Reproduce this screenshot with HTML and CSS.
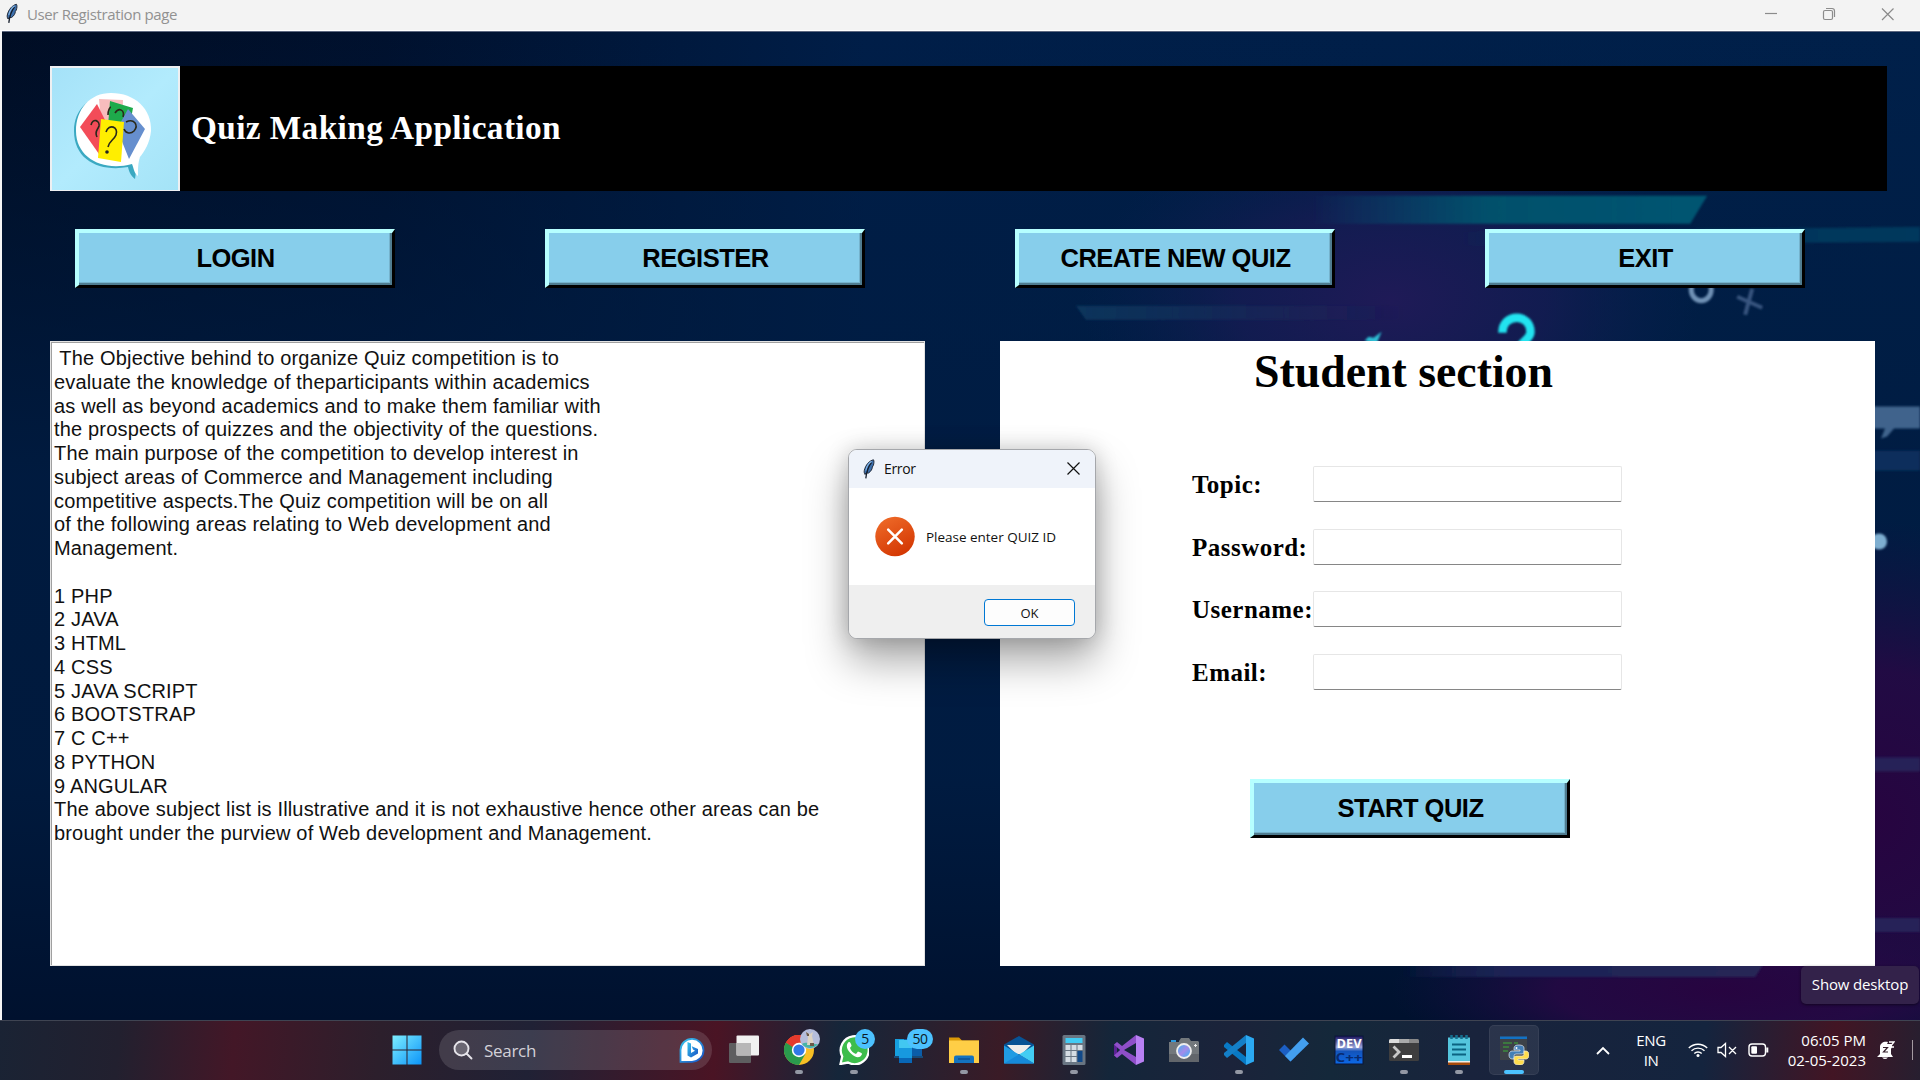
FILE: index.html
```html
<!DOCTYPE html>
<html lang="en">
<head>
<meta charset="utf-8">
<title>User Registration page</title>
<link rel="stylesheet" href="styles.css">
</head>
<body>
<svg width="0" height="0" class="defs">
  <defs>
    <symbol id="feather" viewBox="0 0 12 20">
      <path d="M10.5 .8C6.500 1.500 2.500 6 1.300 11.500c-.3 1.500 0 3 .8 4l.8-1.500h2.600C8 12.500 9.500 9.500 9.300 8l1-1.500C11 4.500 11.200 2 10.500.8Z" fill="#3d70ad" stroke="#222b3a" stroke-width="1"/>
      <path d="M8.500 3.500C5.500 7 3.800 11 2.800 19.300" fill="none" stroke="#141d2b" stroke-width="1.300"/>
      <path d="M8.600 2.300C5.500 4.500 3.500 8 2.800 11.500" fill="none" stroke="#83b4e6" stroke-width="1.100"/>
    </symbol>
  </defs>
</svg>
<div class="desktop">
  <header class="titlebar">
    <svg class="feather" width="12" height="21"><use href="#feather"/></svg>
    <span class="caption">User Registration page</span>
    <div class="controls">
      <svg width="58" height="30" viewBox="0 0 58 30"><path d="M23 14.500h12"/></svg>
      <svg width="58" height="30" viewBox="0 0 58 30"><rect x="23.500" y="11.500" width="9" height="9" rx="1.500"/><path d="M26 9.500h6a2.500 2.500 0 0 1 2.500 2.500v6"/></svg>
      <svg width="58" height="30" viewBox="0 0 58 30"><path d="m24 9.500 11.500 11.500M35.500 9.500 24 21"/></svg>
    </div>
  </header>

  <main class="client">
    <svg class="wallpaper" viewBox="0 31 1920 989" preserveAspectRatio="none">
      <defs>
        <linearGradient id="base" x1="0" y1="0" x2="1" y2="0">
          <stop offset="0" stop-color="#000d24"/><stop offset=".2" stop-color="#00112e"/><stop offset=".45" stop-color="#001e48"/><stop offset="1" stop-color="#00204a"/>
        </linearGradient>
        <linearGradient id="lowleft" x1="0" y1="0" x2="0" y2="1">
          <stop offset="0" stop-color="#001c40" stop-opacity="0"/><stop offset=".45" stop-color="#001c42" stop-opacity=".9"/><stop offset=".75" stop-color="#001b40" stop-opacity=".9"/><stop offset="1" stop-color="#00112e"/>
        </linearGradient>
        <radialGradient id="violet"><stop offset="0" stop-color="#1f1a57"/><stop offset=".5" stop-color="#191b55" stop-opacity=".7"/><stop offset="1" stop-color="#0a1f50" stop-opacity="0"/></radialGradient>
        <radialGradient id="plum"><stop offset="0" stop-color="#270440"/><stop offset=".5" stop-color="#250944" stop-opacity=".9"/><stop offset="1" stop-color="#150e42" stop-opacity="0"/></radialGradient>
        <linearGradient id="teal"><stop offset="0" stop-color="#005a78" stop-opacity="0"/><stop offset=".45" stop-color="#00566f" stop-opacity=".9"/><stop offset="1" stop-color="#005572"/></linearGradient>
        <linearGradient id="haze"><stop offset="0" stop-color="#003f62" stop-opacity="0"/><stop offset=".4" stop-color="#003358"/><stop offset="1" stop-color="#00395d"/></linearGradient>
        <linearGradient id="slate"><stop offset="0" stop-color="#0b3b62" stop-opacity=".8"/><stop offset="1" stop-color="#26305e" stop-opacity="0"/></linearGradient>
        <linearGradient id="floor"><stop offset="0" stop-color="#1f2b5a" stop-opacity="0"/><stop offset=".3" stop-color="#1b2456"/><stop offset="1" stop-color="#272656"/></linearGradient>
        <filter id="soft" x="-10%" y="-10%" width="120%" height="120%"><feGaussianBlur stdDeviation="1"/></filter>
      </defs>
      <rect y="31" width="1920" height="989" fill="url(#base)"/>
      <rect y="31" width="1920" height="989" fill="url(#lowleft)"/>
      <ellipse cx="1390" cy="300" rx="310" ry="190" fill="url(#violet)"/>
      <ellipse cx="1870" cy="820" rx="300" ry="300" fill="url(#plum)"/>
      <ellipse cx="1720" cy="990" rx="330" ry="90" fill="url(#plum)"/>
      <g filter="url(#soft)">
        <path d="M1310 195h397l-17 28h-380Z" fill="url(#teal)"/>
        <path d="M1460 231l460-5v15l-460 4Z" fill="url(#haze)"/>
        <path d="M1075 305h330v14h-320Z" fill="url(#slate)"/>
        <path d="M1502 332c0-20 29-20 28 0-1 8-12 9-14 24" fill="none" stroke="#21e4f0" stroke-width="8.500"/>
        <path d="M1364 340l4-4 5 1 8-6-5 12Z" fill="#2dbfd5"/>
        <ellipse cx="1701" cy="289" rx="10" ry="11" fill="none" stroke="#6f91b5" stroke-width="5"/>
        <path d="M1752 288l-7 26M1737 296l25 11" stroke="#39557f" stroke-width="4"/>
        <path d="M1860 406h60v22h-26l-7 8-6 2 4-10h-25Z" fill="#3f648c"/>
        <rect x="1860" y="450" width="60" height="20" fill="#0a2f5b"/>
        <circle cx="1879" cy="541" r="8" fill="#7eaed0"/>
        <path d="M1860 757h60v14h-60ZM1860 918h60v14h-60Z" fill="#262358"/>
        <path d="M1400 960h366l-11 17h-355Z" fill="url(#floor)"/>
      </g>
    </svg>

    <section class="banner">
      <div class="logo">
        <svg width="126" height="122" viewBox="0 0 126 122">
          <defs><linearGradient id="sky" x1="0" y1="0" x2="1" y2="1"><stop offset="0" stop-color="#a5e2f8"/><stop offset=".5" stop-color="#b2ebfd"/><stop offset="1" stop-color="#a4e3f7"/></linearGradient></defs>
          <rect width="126" height="122" fill="url(#sky)"/>
          <path d="M58 27c23 0 40 15 38 38-1 12-7 23-12 29 0 8 0 11-1 17-5-4-6-8-7-12-27 5-54-6-54-36 0-22 16-36 36-36Z" fill="#1493ae" opacity=".75"/>
          <path d="M59 25c24 0 41 16 40 38-1 12-7 21-11 26-2 6-2 11-2 19-4-3-4-7-6-12-29 8-56-6-56-33 0-22 14-38 35-38Z" fill="#fff"/>
          <path d="m47 31 24 1-1 30-20 3Z" fill="#f8bcbd"/><path d="M58 33 81 40 76 66 56 58Z" fill="#1eaa4b"/>
          <path d="M45 36 28 59 47 86 56 58Z" fill="#f34c59"/><path d="M76 41 93 61 77 91 65 61Z" fill="#668fce"/>
          <path d="m49 51 23 3-3 40-23-4Z" fill="#ffee00"/>
          <g fill="none" stroke="#2a291a" stroke-width="1.600"><path d="M54 64c3-9 13-5 10 3-2 5-7 6-8 12"/><path d="M39 57c2-8 9-4 8 1-1 4-5 5-2 11M63 45c4-6 10-3 8 4M74 54c8-4 13 3 8 9-3 3-8 3-10-2M56 47c0-5 2-8 3-8"/></g>
          <circle cx="55" cy="84" r="1.800" fill="#222"/>
        </svg>
      </div>
      <h1>Quiz Making Application</h1>
    </section>

    <nav class="actions">
      <button class="bevel">LOGIN</button>
      <button class="bevel">REGISTER</button>
      <button class="bevel">CREATE NEW QUIZ</button>
      <button class="bevel">EXIT</button>
    </nav>

    <div class="panels">
      <pre class="about"> The Objective behind to organize Quiz competition is to
evaluate the knowledge of theparticipants within academics
as well as beyond academics and to make them familiar with
the prospects of quizzes and the objectivity of the questions.
The main purpose of the competition to develop interest in
subject areas of Commerce and Management including
competitive aspects.The Quiz competition will be on all
of the following areas relating to Web development and
Management.

1 PHP
2 JAVA
3 HTML
4 CSS
5 JAVA SCRIPT
6 BOOTSTRAP
7 C C++
8 PYTHON
9 ANGULAR
The above subject list is Illustrative and it is not exhaustive hence other areas can be
brought under the purview of Web development and Management.</pre>

      <section class="student">
        <h2>Student section</h2>
        <form class="fields">
          <label for="topic">Topic:</label><input id="topic" type="text">
          <label for="password">Password:</label><input id="password" type="password">
          <label for="username">Username:</label><input id="username" type="text">
          <label for="email">Email:</label><input id="email" type="text">
        </form>
        <button class="bevel start">START QUIZ</button>
      </section>
    </div>
  </main>

  <footer class="taskbar">
    <div class="task"><svg width="30" height="30" viewBox="0 0 30 30"><defs><linearGradient id="win" x1="0" y1="0" x2="1" y2="1"><stop offset="0" stop-color="#7deeff"/><stop offset="1" stop-color="#0c94f8"/></linearGradient></defs><path fill="url(#win)" d="M.5.5h14v14H.500ZM15.500.5h14v14h-14ZM.5 15.500h14v14H.500ZM15.500 15.500h14v14h-14Z"/></svg></div>
    <div class="search">
      <svg width="20" height="20" viewBox="0 0 20 20" fill="none" stroke="#e6e4ea" stroke-width="1.900"><circle cx="8.500" cy="8.500" r="7" fill="#6a6672"/><path d="m13.500 13.500 5 5" stroke-linecap="round"/></svg>
      <span>Search</span>
      <svg class="bing" width="26" height="26" viewBox="0 0 26 26"><defs><linearGradient id="bg1" x1="0" y1="0" x2="1" y2="1"><stop offset="0" stop-color="#37c4ec"/><stop offset="1" stop-color="#174fc5"/></linearGradient></defs><path d="M1.500 24.800V13A11.500 11.500 0 1 1 13 24.800Z" fill="#fff" stroke="url(#bg1)" stroke-width="1.800"/><path d="m8.500 5 3.500 1.500v9.500l4-2.300-2-1.200-1.300-3.300 6.300 2.800v4.500L12 20.500l-3.500-2Z" fill="url(#bg1)"/></svg>
    </div>
    <div class="apps">
      <div class="task"><svg width="30" height="30" viewBox="0 0 30 30"><rect x="0" y="8" width="22" height="20" rx="1" fill="#5e5e60"/><rect x="7.500" y=".5" width="22.500" height="20" rx="1" fill="#f1f1f1"/><rect x="7.500" y="8" width="14.500" height="12.500" fill="#b7b6b7"/></svg></div>
      <div class="task running"><svg width="30" height="30" viewBox="0 0 30 30"><circle cx="15" cy="15" r="15" fill="#f8bf24"/><path d="M15 15 2 7.500A15 15 0 0 1 28 7.500H15Z" fill="#e53a2d"/><path d="M2 7.500A15 15 0 0 0 15 30l6.500-11.300L15 15Z" fill="#2a9b4d"/><path d="M2 7.500 8.500 12 15 7.500h13A15 15 0 0 0 2 7.500Z" fill="#e53a2d"/><circle cx="15" cy="15" r="7.200" fill="#fff"/><circle cx="15" cy="15" r="5.600" fill="#3179e8"/></svg>
        <svg class="avatar" width="20" height="20" viewBox="0 0 20 20"><circle cx="10" cy="10" r="10" fill="#b5bddc"/><path d="M2 15c5-3 11 1 16 0a10 10 0 0 1-16 0Z" fill="#46b4a6"/><path d="m6 3 4 2 3-2-1 4 2 9H7l1-8Z" fill="#ddd3c3"/><path d="m6 3 3 2v2H7ZM10 14h4v3h-4Z" fill="#6b5949"/></svg></div>
      <div class="task running"><svg width="30" height="30" viewBox="0 0 30 30"><path d="M1.500 29 3.200 21.500A14 14 0 1 1 9 27.500Z" fill="#3dbd4b" stroke="#fff" stroke-width="2.300"/><path d="M8.500 8.500c2-3 3-1 4 2 0 1-1 1.500-1.500 2.500 1 3 3 4.700 6 6l2-2.500c3 1 5 2 3.500 3.500-2 4-7 2-10-1-3-2.500-6-7-4-10.500Z" fill="#fff"/></svg><span class="badge">5</span></div>
      <div class="task"><svg width="30" height="30" viewBox="0 0 30 30"><path d="M1 4h27v17H1Z" fill="#0b5da8"/><path d="M1 4h9v17H1Z" fill="#169fde"/><path d="M0 21h29v2H0Z" fill="#174a78"/><path d="M5 5h13v22H5Z" fill="#1799df"/><path d="M5 5h13v8H5Z" fill="#42c7f1"/><path d="M5 23h13v5H5Z" fill="#0867b7"/></svg><span class="badge wide">50</span></div>
      <div class="task running"><svg width="30" height="30" viewBox="0 0 30 30"><path d="M0 2.500h10l3 3h17v12H0Z" fill="#dc9907"/><path d="M0 5.500h30v22.500H0Z" fill="#ffce46"/><path d="M5 28v-5.500q0-2 2-2h16q2 0 2 2V28Z" fill="#1473bf"/><path d="M9 24h12" stroke="#08417c"/></svg></div>
      <div class="task"><svg width="30" height="30" viewBox="0 0 30 30"><path d="M0 9.500 15 1l15 8.500V19H0Z" fill="#075395"/><path d="M3 10h24l-9 9h-6Z" fill="#eeeeec"/><path d="M0 10.500 30 28.500H0Z" fill="#209ce3"/><path d="M30 10.500 15 19.500 30 28.500Z" fill="#43cdf3"/><path d="M0 28.500h30L15 19.500Z" fill="#168ada"/></svg></div>
      <div class="task running"><svg width="30" height="30" viewBox="0 0 30 30"><rect x="3.500" width="23" height="30" rx="1.500" fill="#697582"/><path d="M6.500 3h17v5h-17Z" fill="#42cbf3"/><path d="M6.500 10h5v5h-5ZM12.500 10h5v5h-5ZM18.500 10h5v5h-5ZM6.500 16h5v5h-5ZM12.500 16h5v5h-5ZM6.500 22h5v5h-5ZM12.500 22h5v5h-5Z" fill="#d5dce3"/><path d="M18.500 16h5v11h-5Z" fill="#114989"/></svg></div>
      <div class="task"><svg width="30" height="30" viewBox="0 0 30 30"><path d="M0 9.500 3 7l5 4 14-11v8L10 15l12 7v8L8 19l-5 4-3-2.500Z" fill="#8f4fc9"/><path d="M0 9.500v11L6 15Z" fill="#5b2295"/><path d="M22 0 30 3.500v23L22 30Z" fill="#b880f3"/><path d="M3 12.500v5L6 15Z" fill="#16273b"/></svg></div>
      <div class="task"><svg width="30" height="30" viewBox="0 0 30 30"><path d="M2 5h5v4H2Z" fill="#2c9adf"/><path d="M10 6l2-3h8l2 3h7l1 1v20H0V7h10Z" fill="#73787c"/><path d="M0 19h30v8H0Z" fill="#62666b"/><defs><linearGradient id="lens" x1="0" y1="0" x2="1" y2="1"><stop stop-color="#36b8ef"/><stop offset=".5" stop-color="#a48bea"/><stop offset="1" stop-color="#25bdf6"/></linearGradient></defs><circle cx="15" cy="16" r="7" fill="url(#lens)" stroke="#eee" stroke-width="1.800"/><path d="M25 10.500h3M26.500 9v3" stroke="#eee"/></svg></div>
      <div class="task running"><svg width="30" height="30" viewBox="0 0 30 30"><path d="M0 10 3 7l19 15v8L0 12Z" fill="#0879c4"/><path d="M0 20 3 23 22 8V0L0 18Z" fill="#147fc7"/><path d="M22 0 30 3.500v23L22 30Z" fill="#2ba9f2"/></svg></div>
      <div class="task"><svg width="30" height="30" viewBox="0 0 30 30"><path d="m0 15 5.500-5.500L17 21l-5.500 5.500Z" fill="#1c5fc4"/><path d="m6 21 18-18.500 6 6L11.500 26.500Z" fill="#439fef"/></svg></div>
      <div class="task"><svg width="30" height="30" viewBox="0 0 30 30"><defs><linearGradient id="dev" x1="0" y1="0" x2="0" y2="1"><stop stop-color="#19125c"/><stop offset=".4" stop-color="#9ba4d8"/><stop offset=".55" stop-color="#1354bb"/><stop offset="1" stop-color="#0c69e8"/></linearGradient></defs><rect x="1" y="1" width="28" height="28" fill="url(#dev)" stroke="#0b1739"/><text class="dev-a" x="15" y="13" textLength="25" lengthAdjust="spacingAndGlyphs">DEV</text><text class="dev-b" x="15" y="26.500" textLength="27" lengthAdjust="spacingAndGlyphs">C++</text></svg></div>
      <div class="task running"><svg width="30" height="30" viewBox="0 0 30 30"><rect y="4" width="30" height="22" rx="1.500" fill="#3e3e3f"/><path d="M0 8V5.500Q0 4 1.500 4H10v4Z" fill="#ddd"/><path d="M10 4h10v4H10Z" fill="#aaa"/><path d="M20 4h8.500Q30 4 30 5.500V8H20Z" fill="#888"/><path d="m4.500 11.500 5.500 5.500-5.500 5.500" fill="none" stroke="#c8c8c8" stroke-width="2.800"/><path d="M13 21.500h10" stroke="#fff" stroke-width="3"/></svg></div>
      <div class="task running"><svg width="30" height="30" viewBox="0 0 30 30"><path d="M4 2.500h22V30H4Z" fill="#54c5dd"/><path d="M4 26h22v4H4Z" fill="#f0eeea"/><path d="M4 27.500h22V30H4Z" fill="#a54a0b"/><path d="M8 9.500h14M8 14.500h14M8 19.500h14" stroke="#0b6381" stroke-width="2"/><path d="M7.500 0v4M12.500 0v4M17.500 0v4M22.500 0v4" stroke="#146f8f" stroke-width="2.500"/></svg></div>
      <div class="task active"><svg width="30" height="30" viewBox="0 0 30 30"><path d="M1 1.500h27V25H1Z" fill="#3d4248"/><path d="M1 1.500h27v2.500H1Z" fill="#1271c4"/><path d="M4 8h9M4 12h6M4 16h5M15 8h4" stroke="#3c8a3d" stroke-width="1.500"/><path d="M20 10c-5 0-5 2-5 5h6v1h-8c-4 0-4 8 0 8h2v-3q0-2 2-2h6q2 0 2-2v-4c0-2-2-3-5-3Z" fill="#437fb7" stroke="#e8edf0" stroke-width=".7"/><path d="M20 30c5 0 5-2 5-5h-6v-1h8c4 0 4-8 0-8h-2v3q0 2-2 2h-6q-2 0-2 2v4c0 2 2 3 5 3Z" fill="#ffdd4d" stroke="#f1eee0" stroke-width=".7"/><circle cx="17.500" cy="13" r="1" fill="#fff"/></svg></div>
    </div>
    <div class="tray">
      <svg width="14" height="9" viewBox="0 0 14 9" fill="none" stroke="#fff" stroke-width="1.800"><path d="m1 8 6-6 6 6"/></svg>
      <div class="lang">ENG<br>IN</div>
      <svg class="wifi" width="20" height="16" viewBox="0 0 20 16" fill="none" stroke="#fff" stroke-width="1.400"><path d="M.8 6a13 13 0 0 1 18.400 0M3.500 8.800a9.200 9.200 0 0 1 13 0M6.300 11.500a5.200 5.200 0 0 1 7.400 0"/><circle cx="10" cy="13.500" r="1.500" fill="#fff" stroke="none"/></svg>
      <svg class="sound" width="20" height="16" viewBox="0 0 20 16" fill="none" stroke="#fff" stroke-width="1.300"><path d="M1 5.500h3L8.500 1.500v13L4 10.500H1ZM12 5l7 7M19 5l-7 7"/></svg>
      <svg class="battery" width="21" height="14" viewBox="0 0 21 14" fill="none" stroke="#fff" stroke-width="1.400"><rect x="1" y="1" width="16.500" height="12" rx="3"/><rect x="3.300" y="3.300" width="5.700" height="7.400" rx="1" fill="#fff" stroke="none"/><path d="M19.300 4.500v5" stroke-width="2"/></svg>
      <div class="clock">06:05 PM<br>02-05-2023</div>
      <svg class="bell" width="18" height="20" viewBox="0 0 18 20"><path d="M3 7c0-4 4-6 8-5l-1 2h5v3l-1 2v5l2 3H0l3-3Z" fill="#fff"/><path d="M5 17.500h6q-3 3-6 0Z" fill="#fff"/><path d="M12 2h5l-4 5h4" fill="none" stroke="#fff" stroke-width="1.300"/><path d="M6 7.500h4.500l-4 4.500h4.500" fill="none" stroke="#36202c" stroke-width="1.200"/></svg>
      <i class="peek"></i>
    </div>
  </footer>

  <div class="tooltip">Show desktop</div>

  <div class="dialog">
    <div class="dialog-title">
      <svg width="12" height="20"><use href="#feather"/></svg>
      <span>Error</span>
      <svg class="close" width="13" height="13" viewBox="0 0 13 13"><path d="m.5.5 12 12M12.500.5l-12 12" stroke="#111" stroke-width="1.200"/></svg>
    </div>
    <div class="dialog-body">
      <svg width="40" height="41" viewBox="0 0 41 41"><defs><linearGradient id="err" x1=".2" y1="0" x2=".7" y2="1"><stop stop-color="#ee6a28"/><stop offset="1" stop-color="#d33602"/></linearGradient></defs><circle cx="20.500" cy="20.500" r="20.200" fill="url(#err)"/><path d="m13.500 13.500 14 14M27.500 13.500l-14 14" stroke="#fff" stroke-width="2.600" stroke-linecap="round"/></svg>
      <span>Please enter QUIZ ID</span>
    </div>
    <div class="dialog-foot"><button class="ok">OK</button></div>
  </div>
</div>
</body>
</html>
```
FILE: styles.css
```css
* { box-sizing: border-box; }
body { margin: 0; }
.defs { position: absolute; }
svg { display: block; flex: none; }
.desktop {
  position: relative;
  width: 1920px;
  height: 1080px;
  overflow: hidden;
  display: flex;
  flex-direction: column;
  font-family: "Open Sans", "Noto Sans", sans-serif;
}

/* Window title bar */
.titlebar {
  height: 31px;
  flex: none;
  display: flex;
  align-items: center;
  padding: 0 4px 2px 6px;
  background: #f3f3f3;
  border-bottom: 1px solid #fff;
}
.titlebar .feather { margin-top: -1px; }
.caption { margin-left: 9px; font-size: 15px; letter-spacing: -0.38px; color: #919191; }
.controls { display: flex; margin-left: auto; }
.controls svg { fill: none; stroke: #8b8b8b; stroke-width: 1.2; }

/* Client area */
.client {
  position: relative;
  height: 989px;
  flex: none;
  border-left: 2px solid #f5f5f5;
  padding: 35px 33px 0 48px;
}
.wallpaper { position: absolute; inset: 0; width: 100%; height: 100%; border-top: 1px solid #5d6880; }
.banner {
  position: relative;
  height: 125px;
  display: flex;
  align-items: center;
  background: #000;
}
.logo { width: 130px; height: 125px; border: 2px solid #eef0f2; border-bottom-width: 1px; }
.banner h1 {
  margin: 0 0 1px 11px;
  color: #fff;
  font: bold 33.3px "Liberation Serif", serif;
  letter-spacing: 0.4px;
}
.actions {
  position: relative;
  display: flex;
  gap: 150px;
  margin: 38px 0 0 25px;
}
.bevel {
  width: 320px;
  flex: none;
  height: 59px;
  padding: 0 0 1px;
  border: solid;
  border-width: 4px 3px 3px 4px;
  border-color: #b6ffff #000 #000 #b6ffff;
  background: #87ceeb;
  box-shadow: inset -2px -2px #4f7c90, inset -3px -3px #76b3cc;
  font: bold 25.5px "Liberation Sans", sans-serif;
  letter-spacing: -0.5px;
  color: #000;
}
.panels {
  position: relative;
  display: flex;
  gap: 75px;
  margin-top: 53px;
}
.about {
  width: 875px;
  flex: none;
  height: 625px;
  margin: 0;
  padding: 4px 0 0 2px;
  background: #fff;
  border: solid #a0a0a0;
  border-width: 2px 0 0 2px;
  outline: 1px solid #e3e3e3;
  outline-offset: -1px;
  color: #111;
  font: 20px/23.75px "Liberation Sans", sans-serif;
  letter-spacing: 0.17px;
}
.student {
  width: 875px;
  flex: none;
  height: 625px;
  background: #fff;
}
.student h2 {
  margin: 4px 0 0 254px;
  font: bold 45.8px/54px "Liberation Serif", serif;
}
.fields {
  display: grid;
  grid-template-columns: 121px 309px;
  grid-auto-rows: 36px;
  row-gap: 26.5px;
  margin: 67px 0 0 192px;
  align-items: center;
}
.fields label { padding-top: 2px; font: bold 25px "Liberation Serif", serif; letter-spacing: 0.48px; white-space: nowrap; }
.fields input {
  height: 36px;
  border: 1px solid #e6e6e6;
  border-bottom: 1px solid #868686;
  border-radius: 2px;
  background: #fff;
}
.start { display: block; margin: 89px 0 0 250px; }

/* Taskbar */
.taskbar {
  height: 60px;
  flex: none;
  display: flex;
  align-items: center;
  padding: 0 0 1px 382px;
  border-top: 1px solid #3f4452;
  background: linear-gradient(95deg, #1a2334 0, #22202f 120px, #431727 235px, #2c1f2c 380px, #202135 530px, #4a1424 715px, #15263a 840px, #3a1b26 1000px, #14263a 1110px, #1b233a 1230px, #14283a 1330px, #19233c 1470px, #14243e 1700px, #421524 1830px, #261f30 1920px);
}
.task {
  position: relative;
  width: 50px;
  height: 50px;
  display: flex;
  align-items: center;
  justify-content: center;
}
.apps { display: flex; gap: 5px; margin-left: 7px; }
.running::after, .active::after {
  content: "";
  position: absolute;
  left: 21px;
  bottom: 1px;
  width: 8px;
  height: 4px;
  border-radius: 2px;
  background: #9398a4;
}
.active { background: rgba(255, 255, 255, .08); border-radius: 5px; box-shadow: inset 0 0 0 1px rgba(255, 255, 255, .06); }
.active::after { left: 15px; width: 20px; background: #4cc2ff; }
.avatar { position: absolute; left: 26px; top: 4px; }
.badge {
  position: absolute;
  left: 26px;
  top: 4px;
  width: 20px;
  height: 20px;
  border-radius: 10px;
  background: #4cc2ff;
  color: #0c1a26;
  font-size: 14px;
  line-height: 20px;
  text-align: center;
  letter-spacing: -0.4px;
}
.badge.wide { left: 23px; width: 26px; }
.search {
  width: 273px;
  height: 40px;
  margin-left: 7px;
  padding: 0 7px 0 14px;
  display: flex;
  align-items: center;
  border-radius: 20px;
  background: rgba(255, 255, 255, .13);
  color: #d3d1d8;
  font-size: 17px;
  letter-spacing: -0.3px;
}
.search span { margin-left: 11px; }
.bing { margin-left: auto; }
.dev-a, .dev-b { font: bold 12px "Open Sans", sans-serif; text-anchor: middle; fill: #fff; }
.dev-b { fill: #082b70; }
.tray {
  display: flex;
  align-items: center;
  margin-left: 57px;
  color: #fff;
  font-size: 15px;
  line-height: 20px;
  letter-spacing: -0.4px;
}
.lang, .clock { margin-top: -1px; }
.lang { width: 40px; margin-left: 21px; text-align: center; }
.wifi { margin-left: 17px; }
.sound { margin-left: 9px; }
.battery { margin-left: 11px; }
.clock { width: 97px; text-align: right; white-space: nowrap; letter-spacing: 0; }
.bell { margin-left: 11px; }
.peek { width: 1px; height: 20px; margin-left: 17px; background: #a49aa2; }

.tooltip {
  position: absolute;
  left: 1801px;
  top: 966px;
  width: 118px;
  height: 38px;
  border-radius: 5px;
  background: #33224a;
  box-shadow: 0 1px 3px rgba(0, 0, 0, .5);
  color: #fff;
  font-size: 15px;
  line-height: 37px;
  letter-spacing: -0.15px;
  text-align: center;
}

/* Error message box */
.dialog {
  position: absolute;
  left: 848px;
  top: 449px;
  width: 248px;
  height: 190px;
  border: 1px solid #a5a7ab;
  border-radius: 9px;
  overflow: hidden;
  background: #fff;
  box-shadow: 0 22px 42px rgba(0, 0, 0, .34), 0 0 22px rgba(0, 0, 0, .18);
  display: flex;
  flex-direction: column;
  font-size: 14px;
  color: #111;
}
.dialog-title { height: 38px; display: flex; align-items: center; padding: 0 15px 1px 14px; background: #eff3fa; }
.dialog-title span { margin-left: 9px; letter-spacing: -0.35px; }
.close { margin-left: auto; }
.dialog-body { height: 97px; display: flex; align-items: center; padding-left: 26px; }
.dialog-body span { margin: 1px 0 0 11px; font-size: 13.5px; letter-spacing: -0.02px; white-space: nowrap; }
.dialog-foot { flex: 1; display: flex; justify-content: flex-end; padding: 14px 20px 0 0; background: #efefef; }
.ok {
  width: 91px;
  height: 27px;
  padding: 0;
  border: 1.5px solid #0078d4;
  border-radius: 4px;
  background: #fdfdfd;
  color: #111;
  font: 13px "Open Sans", sans-serif;
}
```
